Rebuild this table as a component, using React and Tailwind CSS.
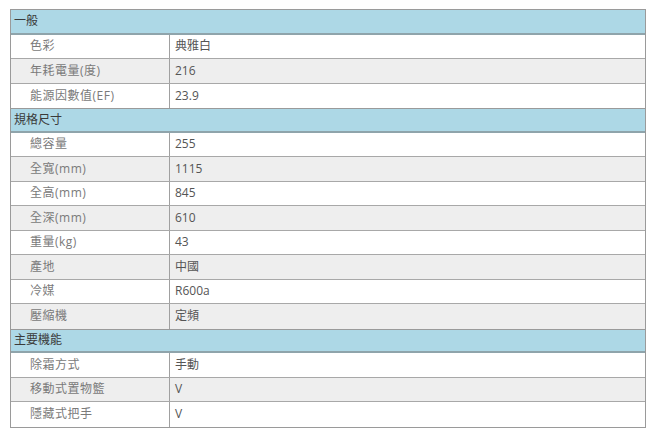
import React from "react";

const groups = [
  {
    title: "一般",
    rows: [
      ["色彩", "典雅白"],
      ["年耗電量(度)", "216"],
      ["能源因數值(EF)", "23.9"],
    ],
  },
  {
    title: "規格尺寸",
    rows: [
      ["總容量", "255"],
      ["全寬(mm)", "1115"],
      ["全高(mm)", "845"],
      ["全深(mm)", "610"],
      ["重量(kg)", "43"],
      ["產地", "中國"],
      ["冷媒", "R600a"],
      ["壓縮機", "定頻"],
    ],
  },
  {
    title: "主要機能",
    rows: [
      ["除霜方式", "手動"],
      ["移動式置物籃", "V"],
      ["隱藏式把手", "V"],
    ],
  },
];

export default function App() {
  return (
    <div
      className="w-[650px] h-[438px] bg-white pt-[9px] pl-[10px]"
      style={{ fontFamily: '"Open Sans", "Noto Sans CJK TC", sans-serif' }}
    >
      <div className="w-[636px] border border-[#9a9a9a] flex flex-col text-[12px]">
        {groups.map((g, gi) => (
          <React.Fragment key={g.title}>
            <div
              className={`h-[24.5px] flex items-center bg-[#add8e6] pl-[3px] text-[#3a3a3a] border-b-2 border-[#8fa4ab] ${
                gi > 0 ? "border-t border-t-[#9a9a9a]" : ""
              }`}
            >
              {g.title}
            </div>
            {g.rows.map(([k, v], i) => (
              <div
                key={k}
                className={`h-[24.5px] flex ${
                  i % 2 === 1 ? "bg-[#eeeeee]" : "bg-white"
                } ${i < g.rows.length - 1 ? "border-b border-[#a8a8a8]" : ""}`}
              >
                <div className="w-[159px] flex items-center pl-[19px] text-[#7a7a7a] tracking-[0.5px] border-r border-[#a0a0a0]">
                  {k}
                </div>
                <div className="flex-1 flex items-center pl-[5px] text-[#555555]">
                  {v}
                </div>
              </div>
            ))}
          </React.Fragment>
        ))}
      </div>
    </div>
  );
}
